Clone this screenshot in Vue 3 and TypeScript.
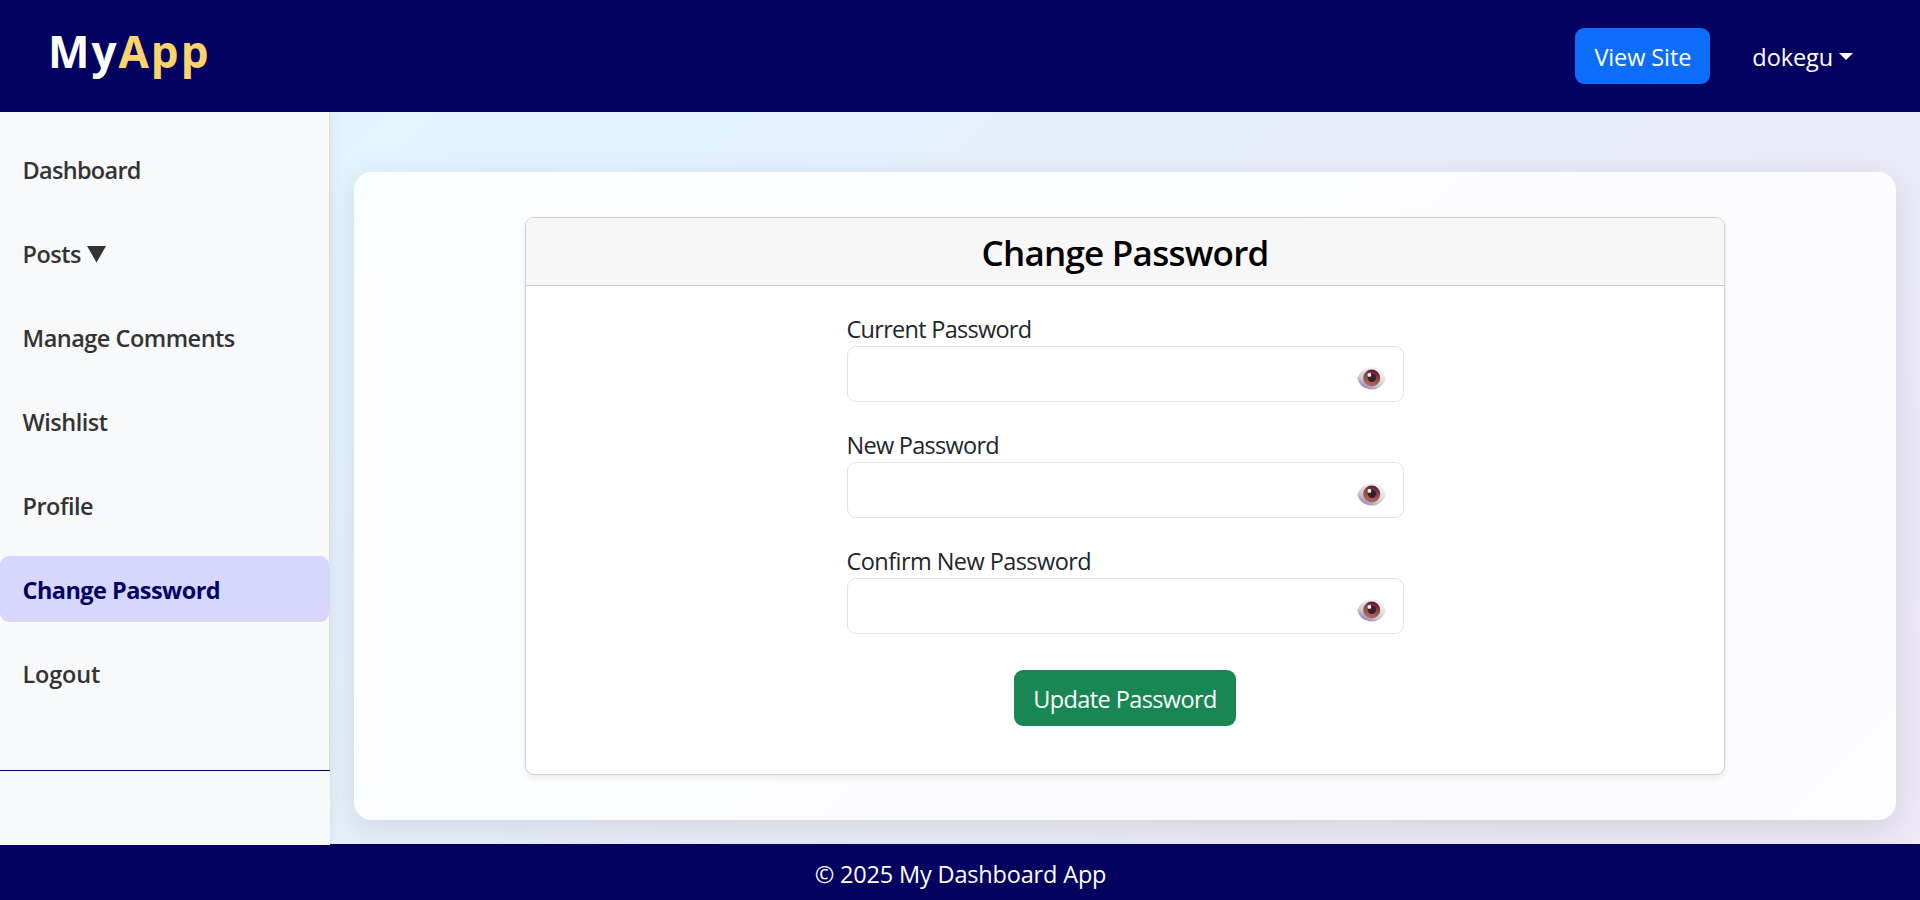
<script setup lang="ts">
import { ref } from 'vue'

interface NavItem { label: string; active?: boolean; submenu?: boolean }
interface Field { id: string; label: string; tone: string }

const nav: NavItem[] = [
  { label: 'Dashboard' },
  { label: 'Posts', submenu: true },
  { label: 'Manage Comments' },
  { label: 'Wishlist' },
  { label: 'Profile' },
  { label: 'Change Password', active: true },
  { label: 'Logout' },
]

const fields: Field[] = [
  { id: 'current', label: 'Current Password', tone: 'tight' },
  { id: 'new', label: 'New Password', tone: 'tight' },
  { id: 'confirm', label: 'Confirm New Password', tone: 'snug' },
]

const values = ref<Record<string, string>>({ current: '', new: '', confirm: '' })
const shown = ref<Record<string, boolean>>({})
</script>

<template>
  <div class="page">
    <header class="topbar">
      <div class="logo">My<span>App</span></div>
      <div class="actions">
        <a class="btn view-site">View Site</a>
        <a class="user">dokegu<i class="caret"></i></a>
      </div>
    </header>

    <div class="body">
      <aside class="sidebar">
        <nav class="nav">
          <a v-for="item in nav" :key="item.label" class="nav-item" :class="{ active: item.active }">
            {{ item.label }}
            <svg v-if="item.submenu" class="arrow" viewBox="0 0 19 17"><path d="M0 0H19L9.5 16.5Z" fill="#333" /></svg>
          </a>
        </nav>
        <div class="sidebar-foot"></div>
      </aside>

      <main class="main">
        <section class="panel">
          <div class="card">
            <div class="card-header"><h3>Change Password</h3></div>
            <form class="form" @submit.prevent>
              <div v-for="f in fields" :key="f.id" class="field">
                <label :for="f.id" :class="f.tone">{{ f.label }}</label>
                <div class="input">
                  <input :id="f.id" v-model="values[f.id]" :type="shown[f.id] ? 'text' : 'password'" />
                  <svg class="eye" viewBox="0 0 29 23" @click="shown[f.id] = !shown[f.id]">
                    <defs>
                      <linearGradient :id="'w' + f.id" x1="0.2" y1="1" x2="0.7" y2="0.25">
                        <stop offset="0" stop-color="#8e72b4" />
                        <stop offset="0.45" stop-color="#cfc9d1" />
                        <stop offset="1" stop-color="#ebebeb" />
                      </linearGradient>
                      <linearGradient :id="'i' + f.id" x1="0.7" y1="0" x2="0.35" y2="1">
                        <stop offset="0" stop-color="#5d1233" />
                        <stop offset="0.4" stop-color="#84443f" />
                        <stop offset="1" stop-color="#b5705e" />
                      </linearGradient>
                    </defs>
                    <path d="M.3 11.6C2.500 4 8.500.5 14.500.5S27 4 28.700 11.200C27 19 20.500 22.500 14.800 22.500S2.500 19.500.3 11.600Z" :fill="'url(#w' + f.id + ')'" />
                    <circle cx="14.700" cy="11" r="8.500" :fill="'url(#i' + f.id + ')'" />
                    <circle cx="14.900" cy="10.800" r="4.200" fill="#371e2b" />
                    <circle cx="12.400" cy="7.900" r="1.900" fill="#fff" />
                  </svg>
                </div>
              </div>
              <button class="btn update" type="submit">Update Password</button>
            </form>
          </div>
        </section>
      </main>
    </div>

    <footer class="footer">© 2025 My Dashboard App</footer>
  </div>
</template>

<style>
body { margin: 0; }
</style>

<style scoped>
* { box-sizing: border-box; }
.page {
  display: flex;
  flex-direction: column;
  height: 900px;
  overflow: hidden;
  font: 400 23.5px/36px "Open Sans", "Noto Sans", sans-serif;
  color: #212529;
}
.topbar {
  display: flex;
  flex: none;
  align-items: center;
  justify-content: space-between;
  height: 112px;
  padding: 0 67px 0 48px;
  background: #040260;
  color: #fff;
}
.logo {
  padding-bottom: 11px;
  font-size: 44px;
  font-weight: 700;
  line-height: 60px;
  letter-spacing: 2px;
}
.logo span { color: #fbd56c; }
.actions { display: flex; align-items: center; gap: 42px; }
.btn {
  display: flex;
  align-items: center;
  justify-content: center;
  height: 56px;
  padding: 2px 0 0;
  border: 0;
  border-radius: 9px;
  color: #fff;
  font: inherit;
}
.view-site { width: 135px; background: #0d6efd; letter-spacing: -0.1px; }
.user { display: flex; align-items: center; padding-top: 2px; letter-spacing: -0.1px; }
.caret {
  margin: 0 0 2px 6px;
  border: 7px solid transparent;
  border-top-color: #fff;
  border-bottom: 0;
}
.body { display: flex; flex: 1; min-height: 0; }
.sidebar {
  position: relative;
  z-index: 1;
  flex: none;
  display: flex;
  flex-direction: column;
  width: 330px;
  margin-bottom: -1px;
  background: #f8f9fb;
  box-shadow: 3px 0 9px rgba(0, 0, 0, 0.05);
  clip-path: inset(0 -20px 0 0);
}
.nav {
  display: flex;
  flex: 1;
  flex-direction: column;
  gap: 18px;
  padding-top: 24px;
  border-right: 1px solid #dcdcdc;
}
.nav-item {
  display: flex;
  align-items: center;
  gap: 6px;
  height: 66px;
  padding: 2px 22px 0 22.5px;
  border-radius: 9px;
  color: #333;
  font-weight: 540;
  letter-spacing: -0.5px;
}
.nav-item:first-child { letter-spacing: -0.7px; }
.nav-item:last-child { letter-spacing: -0.2px; }
.nav-item.active {
  background: #d6d6ff;
  color: #040260;
  font-weight: 700;
  letter-spacing: -0.55px;
}
.arrow { width: 19px; height: 17px; }
.sidebar-foot { height: 75px; border-top: 1px solid #040260; }
.main {
  flex: 1;
  padding: 60px 24px 24px;
  background: linear-gradient(135deg, #e1f4fe, #e9ebf8 60%, #ede7f6);
}
.panel {
  display: flex;
  justify-content: center;
  height: 648px;
  padding-top: 45px;
  border-radius: 18px;
  background: rgba(255, 255, 255, 0.85);
  box-shadow: 0 8px 32px rgba(0, 0, 0, 0.1);
}
.card {
  width: 1200px;
  height: 558px;
  border: 1px solid #cfcfd1;
  border-radius: 9px;
  background: #fff;
  box-shadow: 0 3px 6px rgba(0, 0, 0, 0.075);
  overflow: hidden;
}
.card-header {
  height: 68px;
  padding-top: 14px;
  border-bottom: 1px solid #c9c9c9;
  background: #f7f7f7;
  text-align: center;
}
h3 {
  margin: 0;
  color: #000;
  font-size: 35px;
  font-weight: 560;
  line-height: 42px;
  letter-spacing: -0.75px;
}
.form {
  display: flex;
  flex-direction: column;
  align-items: center;
  width: 557px;
  margin: 24px auto 0;
}
.field { width: 100%; margin-bottom: 24px; }
.field label { display: block; height: 36px; padding-top: 1px; }
.tight { letter-spacing: -0.72px; }
.snug { letter-spacing: -0.56px; }
.input {
  display: flex;
  align-items: center;
  height: 56px;
  padding: 8px 17px 0 18px;
  border: 1px solid #dee2e6;
  border-radius: 9px;
}
.input input {
  flex: 1;
  height: 36px;
  padding: 0;
  border: 0;
  outline: 0;
  background: transparent;
  font: inherit;
}
.eye { flex: none; width: 29px; height: 23px; }
.update {
  width: 222px;
  margin-top: 12px;
  background: #198754;
  letter-spacing: -0.6px;
}
.footer {
  flex: none;
  height: 56px;
  padding: 12px 0 0 1px;
  background: #040260;
  color: #fff;
  text-align: center;
  letter-spacing: -0.17px;
}
</style>
